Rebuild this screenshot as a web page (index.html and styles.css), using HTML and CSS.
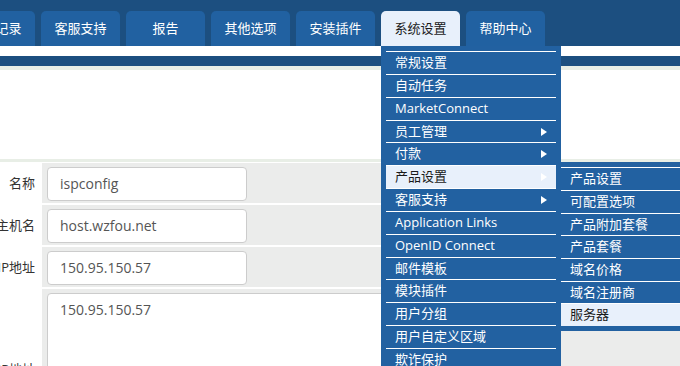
FILE: index.html
```html
<!DOCTYPE html>
<html lang="zh">
<head>
<meta charset="utf-8">
<title>系统设置</title>
<link rel="stylesheet" href="styles.css">
</head>
<body>
<header class="topbar">
  <nav class="tabs">
    <div class="tab first">交易记录</div>
    <div class="tab">客服支持</div>
    <div class="tab">报告</div>
    <div class="tab">其他选项</div>
    <div class="tab">安装插件</div>
    <div class="tab active">系统设置
      <ul class="menu">
        <li class="item">常规设置</li>
        <li class="item">自动任务</li>
        <li class="item">MarketConnect</li>
        <li class="item sub">员工管理</li>
        <li class="item sub">付款</li>
        <li class="item sub current">产品设置
          <ul class="menu submenu">
            <li class="item">产品设置</li>
            <li class="item">可配置选项</li>
            <li class="item">产品附加套餐</li>
            <li class="item">产品套餐</li>
            <li class="item">域名价格</li>
            <li class="item">域名注册商</li>
            <li class="item current">服务器</li>
          </ul>
        </li>
        <li class="item sub">客服支持</li>
        <li class="item">Application Links</li>
        <li class="item">OpenID Connect</li>
        <li class="item">邮件模板</li>
        <li class="item">模块插件</li>
        <li class="item">用户分组</li>
        <li class="item">用户自定义区域</li>
        <li class="item">欺诈保护</li>
      </ul>
    </div>
    <div class="tab">帮助中心</div>
  </nav>
</header>
<div class="gap-white"></div>
<div class="bar-blue"></div>
<div class="line-light"></div>
<main class="content">
  <div class="blank"></div>
  <div class="form">
    <div class="label">名称</div>
    <div class="field"><div class="input">ispconfig</div></div>
    <div class="label">主机名</div>
    <div class="field"><div class="input">host.wzfou.net</div></div>
    <div class="label">IP地址</div>
    <div class="field"><div class="input">150.95.150.57</div></div>
    <div class="label">分配IP地址</div>
    <div class="field"><div class="textarea">150.95.150.57</div></div>
  </div>
</main>
</body>
</html>
```
FILE: styles.css
```css
html, body {
  margin: 0;
  padding: 0;
  width: 680px;
  height: 366px;
  overflow: hidden;
  background: #ffffff;
  font-family: "Open Sans", "Noto Sans CJK SC", sans-serif;
  font-size: 13px;
}

.topbar {
  background: #1c4f80;
  height: 46px;
  box-sizing: border-box;
  padding-top: 11px;
  position: relative;
  z-index: 5;
}

.tabs {
  display: flex;
  gap: 6px;
  height: 35px;
}

.tab {
  flex: 0 0 79px;
  height: 35px;
  line-height: 35px;
  text-align: center;
  color: #ffffff;
  background: #2161a1;
  border-radius: 5px 5px 0 0;
  white-space: nowrap;
  position: relative;
}

.tab.first {
  margin-left: -44px;
}

.tab.active {
  background: #e8f0fb;
  color: #1a1a1a;
}

.menu {
  list-style: none;
  margin: 0;
  padding: 5px;
  position: absolute;
  top: 35px;
  left: 0;
  width: 170px;
  background: #2261a1;
  text-align: left;
  line-height: 21px;
}

.item {
  position: relative;
  height: 21.85px;
  border-top: 1px solid #ffffff;
  padding-left: 9px;
  color: #ffffff;
  white-space: nowrap;
}

.item.sub::after {
  content: "";
  position: absolute;
  right: 9px;
  top: 7px;
  border-style: solid;
  border-width: 4px 0 4px 6px;
  border-color: transparent transparent transparent #ffffff;
}

.item.current {
  background: #e8f0fb;
  color: #1a1a1a;
}

.submenu {
  top: -4px;
  left: 170px;
  width: 170px;
  line-height: 20px;
}

.submenu .item {
  height: 21.7px;
}

.gap-white {
  height: 10px;
  background: #ffffff;
}

.bar-blue {
  height: 10px;
  background: #1c4f80;
}

.line-light {
  height: 4px;
  background: #e8eee6;
}

.blank {
  height: 89px;
  border-bottom: 3px solid #e8eee6;
  margin-bottom: 1px;
}

.form {
  display: grid;
  grid-template-columns: 42px 1fr;
  grid-auto-rows: 40px;
  row-gap: 2px;
}

.label {
  display: flex;
  justify-content: flex-end;
  align-items: center;
  padding-right: 7px;
  padding-bottom: 1px;
  white-space: nowrap;
  color: #333333;
  font-size: 13px;
}

.field {
  background: #ebeceb;
  padding: 4px 5px;
}

.input {
  box-sizing: border-box;
  width: 200px;
  height: 34px;
  line-height: 32px;
  border: 1px solid #cccccc;
  border-radius: 4px;
  background: #ffffff;
  padding: 0 12px;
  font-size: 14px;
  color: #555555;
}

.form .label:nth-last-child(2) {
  height: 158px;
}

.form .field:last-child {
  height: 158px;
  box-sizing: border-box;
}

.textarea {
  box-sizing: border-box;
  width: 500px;
  height: 150px;
  border: 1px solid #cccccc;
  border-radius: 4px;
  background: #ffffff;
  padding: 6px 12px;
  line-height: 20px;
  font-size: 14px;
  color: #555555;
}
```
